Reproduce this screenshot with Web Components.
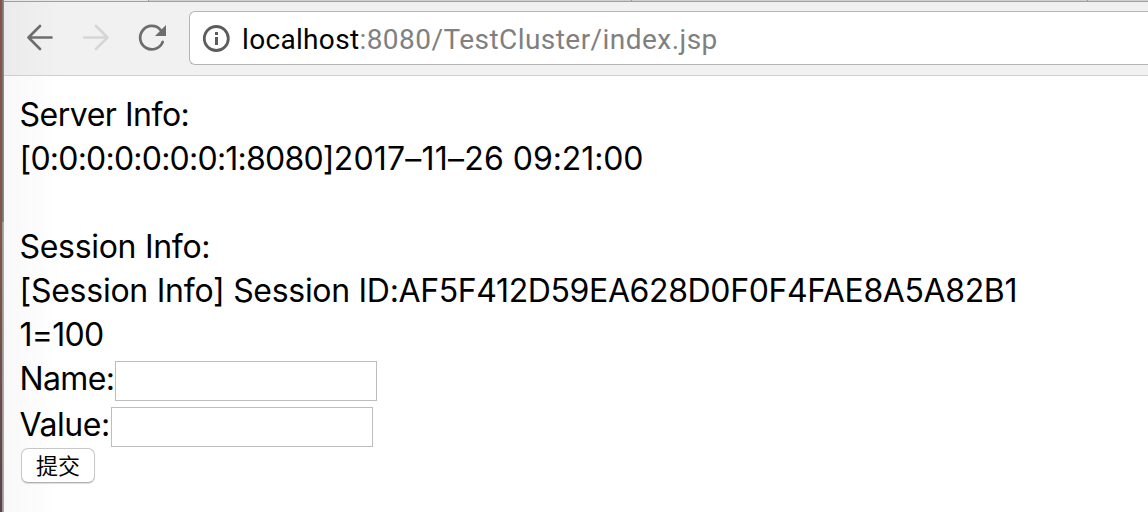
<!DOCTYPE html>
<html lang="zh-CN">
<head>
<meta charset="utf-8">
<title>localhost:8080/TestCluster/index.jsp</title>
<style>
html, body { margin: 0; height: 100%; overflow: hidden; background: #fff; }
</style>
</head>
<body>
<browser-window>
  <tab-strip slot="tabs"></tab-strip>
  <browser-toolbar slot="toolbar"><address-bar><span slot="host">localhost</span><span slot="path">:8080/TestCluster/index.jsp</span></address-bar></browser-toolbar>
  <page-content>
    <text-line style="letter-spacing:-.48px">Server Info:</text-line>
    <text-line style="letter-spacing:-.1px"><span style="letter-spacing:-.78px">[0:0:0:0:0:0:0:1:8080]</span><span style="letter-spacing:.2px">2017–11–26</span> 09:21:00</text-line>
    <text-line></text-line>
    <text-line style="letter-spacing:-.3px">Session Info:</text-line>
    <text-line style="letter-spacing:-.38px"><span style="letter-spacing:-.25px">[Session Info] </span><span style="letter-spacing:-.3px">Session ID:</span>AF5F412D59EA628D0F0F4FAE8A5A82B1</text-line>
    <text-line style="letter-spacing:-.75px">1=100</text-line>
    <form-field style="--label:95px;letter-spacing:-.65px">Name:</form-field>
    <form-field style="--label:91px;letter-spacing:-.45px">Value:</form-field>
    <submit-button>提交</submit-button>
  </page-content>
</browser-window>
<script>
function define(name, html) {
  const template = document.createElement('template');
  template.innerHTML = html;
  customElements.define(name, class extends HTMLElement {
    constructor() {
      super();
      this.attachShadow({ mode: 'open' }).appendChild(template.content.cloneNode(true));
    }
  });
}

define('browser-window', `
<style>
:host { display: grid; grid-template-columns: 2px 1px 1px minmax(0, 1fr); height: 512px; width: 1148px; overflow: hidden; }
.desk { background: linear-gradient(#8c5148, #80554a 45%, #765048 65%, #594248); }
.edge { background: linear-gradient(#777 0 222px, #999 222px); }
.rim { background: linear-gradient(#8b8b8b 0 222px, #aaa 222px); }
.view { display: flex; flex-direction: column; min-width: 0; background: linear-gradient(90deg, #f8f8f8, #fff 56px); }
</style>
<div class="desk"></div><div class="edge"></div><div class="rim"></div>
<div class="view"><slot name="tabs"></slot><slot name="toolbar"></slot><slot></slot></div>`);

define('tab-strip', `
<style>
:host { display: flex; height: 1px; flex: none; background: #d0d0d0; border-bottom: 1px solid #a0a0a0; }
i { flex: none; box-sizing: border-box; border-right: 1px solid #999; }
.a { width: 145px; background: #e6e6e6; } .b { width: 483px; } .c { width: 456px; }
</style><i class="a"></i><i class="b"></i><i class="c"></i>`);

define('browser-toolbar', `
<style>
:host { display: flex; box-sizing: border-box; flex: none; height: 74px; padding: 9px 0 0 16px; background: linear-gradient(90deg, #ebebeb, #f1f1f1 56px); border-bottom: 1px solid #cfcfcf; }
svg { flex: none; width: 40px; height: 54px; margin-right: 16px; fill: none; stroke: #6d6d6d; stroke-width: 2.7; stroke-linecap: round; stroke-linejoin: round; }
svg:last-of-type { margin-right: 1px; }
.off { stroke: #d6d6d6; }
slot { display: block; flex: 1; min-width: 0; }
</style>
<svg viewBox="20 11 40 54"><path d="M51.5 37.5H28.5M40 26 28.5 37.5 40 49"/></svg>
<svg class="off" viewBox="76 11 40 54"><path d="M84.3 37.5H107.5M96 26l11.5 11.5L96 49"/></svg>
<svg viewBox="132 11 40 54"><path d="M160.5 29.8A11.7 11.7 0 1 0 162.7 42"/><path d="M166 25v11h-11z" fill="#6d6d6d" stroke="none"/></svg>
<slot></slot>`);

define('address-bar', `
<style>
:host { display: flex; align-items: center; box-sizing: border-box; height: 54px; margin-left: 16px; padding-left: 12px; border: 1px solid #b4b4b4; border-right: 0; border-radius: 6px 0 0 6px; background: #fff; font: 28px/52px Roboto, sans-serif; white-space: nowrap; }
svg { flex: none; width: 28px; height: 28px; margin-right: 12px; }
span { padding-top: 3px; }
.host { color: #000; letter-spacing: .33px; } .path { color: #808080; letter-spacing: .45px; }
</style>
<svg viewBox="0 0 28 28"><circle cx="14.3" cy="14.5" r="12" fill="none" stroke="#5c5c5c" stroke-width="2.8"/><path d="M13 8h3v3h-3zM13 13h3v8h-3z" fill="#5c5c5c"/></svg>
<span class="host"><slot name="host"></slot></span><span class="path"><slot name="path"></slot></span>`);

define('page-content', `
<style>
:host { display: flex; flex-direction: column; align-items: flex-start; padding: 16px 0 0 15.5px; font: 32px/45px Inter, "Noto Sans CJK SC", sans-serif; color: #000; }
</style><slot></slot>`);

define('text-line', `
<style>:host { display: block; height: 44px; white-space: nowrap; }</style><slot></slot>`);

define('form-field', `
<style>
:host { display: flex; align-items: flex-start; height: 46px; white-space: nowrap; }
label { width: var(--label); flex: none; }
input { box-sizing: border-box; width: 262px; height: 40px; margin: 5px 0 0; padding: 0 6px; border: 1px solid #bdbdbd; border-radius: 0; background: #fff; font: 22px Inter, sans-serif; outline: 0; }
</style><label><slot></slot></label><input type="text">`);

define('submit-button', `
<style>
:host { display: block; margin-left: 1px; }
button { display: block; box-sizing: border-box; width: 74px; height: 35px; padding: 0 0 2px 1px; border: 1px solid #c8c8c8; border-bottom-color: #b0b0b0; border-radius: 7px; background: #fff; box-shadow: 0 1px 1px #0002; font: 22px/31px "Noto Sans CJK SC", sans-serif; color: #000; }
</style><button type="button"><slot></slot></button>`);
</script>
</body>
</html>
